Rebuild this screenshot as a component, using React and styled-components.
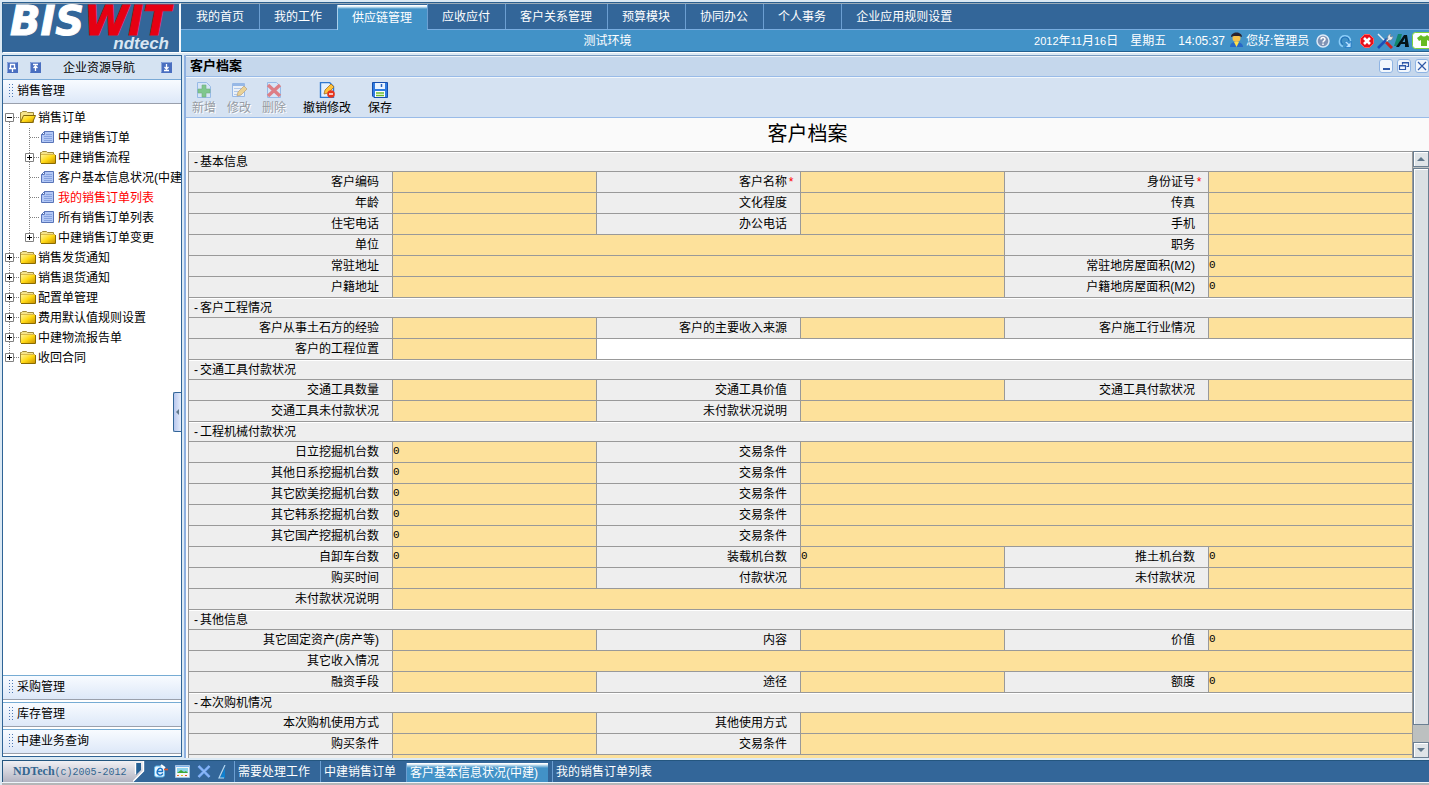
import { Fragment, useState } from "react";
import styled, { createGlobalStyle, css } from "styled-components";

const GlobalStyle = createGlobalStyle`
  * {
    box-sizing: border-box;
  }
  body {
    margin: 0;
    overflow: hidden;
    background: #dbe9f4;
    color: #000;
    font-family: "Liberation Sans", "Noto Sans CJK SC", sans-serif;
    font-size: 12px;
    line-height: 18px;
  }
  button {
    padding: 0;
    border: 0;
    background: none;
    color: inherit;
    font: inherit;
    cursor: pointer;
    white-space: nowrap;
  }
  svg {
    display: block;
    flex: none;
  }
`;

const Page = styled.div`
  display: flex;
  flex-direction: column;
  height: 100vh;
  padding: 2px 0 0 2px;
`;

/* ---------- header ---------- */

const Header = styled.header`
  display: flex;
  flex: none;
  border-top: 1px solid #2a5f8f;
  border-left: 1px solid #2a5f8f;
  border-bottom: 1px solid #fff;
  color: #fff;
`;

const Logo = styled.div`
  width: 178px;
  flex: none;
  padding-left: 7px;
  border-top: 1px solid #9aabb9;
  border-right: 2px solid #f4f8fb;
  background: #336699;
  font-style: italic;
  font-weight: 700;
`;

const LogoName = styled.div`
  height: 32px;
  font-family: "DejaVu Sans", sans-serif;
  font-size: 40px;
  line-height: 34px;
  white-space: nowrap;
  color: #fff;
  -webkit-text-stroke: 1px currentColor;

  & span {
    color: #e60012;
  }
`;

const LogoSub = styled.div`
  padding-right: 10px;
  text-align: right;
  font-size: 17px;
  line-height: 16px;
  color: #d9e6f2;
`;

const HeaderMain = styled.div`
  flex: 1;
  min-width: 0;
  border-top: 1px solid #9aabb9;
`;

const Nav = styled.nav`
  display: flex;
  height: 26px;
  background: #336699;
  box-shadow: inset 0 -1px #79ade0;
`;

const NavTab = styled.button`
  height: 25px;
  padding: 0 15px 0 14px;
  border-left: 1px solid #6c9fd2;
  &:first-child {
    border-left-color: #336699;
  }
  ${({ $active }) =>
    $active &&
    css`
      margin-top: 1px;
      border-left-color: #a9d0ec;
      background: linear-gradient(#fff 1px, #c4dff0 2px, #4292c7 4px);
    `}
`;

const StatusBar = styled.div`
  display: grid;
  grid-template-columns: 41fr 19fr;
  align-items: center;
  height: 22px;
  border-bottom: 1px solid #24608f;
  background: #4292c7;
`;

const EnvName = styled.div`
  text-align: center;
`;

const StatusRight = styled.div`
  display: flex;
  justify-content: flex-end;
  align-items: center;
  white-space: nowrap;

  & > span {
    margin-right: 12px;
  }
  & > span:nth-of-type(3) {
    margin-right: 4px;
  }
  & > button {
    flex: none;
    overflow: hidden;
  }
`;

const Digits = styled.b`
  font-size: 11px;
  font-weight: 400;
`;

const Greeting = styled.div`
  width: 70px;
  margin-left: 2px;
`;

const IconRow = styled.div`
  display: flex;
  align-items: center;
  gap: ${({ $gap }) => $gap}px;
  margin-right: 3px;
`;

/* ---------- sidebar ---------- */

const Body = styled.div`
  display: flex;
  flex: 1;
  min-height: 0;
  margin: 2px 0;
`;

const Sidebar = styled.aside`
  position: relative;
  display: flex;
  flex-direction: column;
  flex: none;
  width: 180px;
  margin-bottom: 1px;
  border: 1px solid #2f6496;
  background: #fff;
`;

const SideHead = styled.div`
  display: flex;
  align-items: center;
  height: 24px;
  padding: 0 9px 0 4px;
  border-bottom: 1px solid #7aaad6;
  background: #d5e3f2;

  & button + button {
    margin-left: 12px;
  }
  & span {
    flex: 1;
    padding-right: 4px;
    text-align: center;
  }
`;

const SideSection = styled.button`
  display: flex;
  align-items: center;
  gap: 4px;
  flex: none;
  height: 24px;
  padding: 0 0 2px 5px;
  border-bottom: 1px solid #9aa0ac;
  background: linear-gradient(#f8fbff, #dde8f8);
  text-align: left;
  ${({ $folded }) =>
    $folded &&
    css`
      height: 25px;
      margin-bottom: 2px;
      border-top: 1px solid #76acd4;
    `}
`;

const Grip = styled.i`
  width: 5px;
  height: 15px;
  background: radial-gradient(circle, #4c78b4 1px, transparent 1px) 0 0 / 3px 3px;
`;

const Tree = styled.ul`
  flex: 1;
  min-height: 0;
  margin: 0;
  padding: 4px 0 0;
  overflow: hidden;
  list-style: none;
`;

const TreeRow = styled.li`
  display: flex;
  align-items: center;
  height: 20px;
`;

const TreeLink = styled.a`
  margin-left: 2px;
  color: ${({ $hot }) => ($hot ? "#f00" : "#000")};
  text-decoration: none;
  white-space: nowrap;
`;

const Handle = styled.button`
  position: absolute;
  top: 48%;
  right: 0;
  display: grid;
  place-items: center;
  width: 8px;
  height: 40px;
  border: 1px solid #336699;
  border-right: 0;
  border-radius: 2px 0 0 2px;
  background: linear-gradient(90deg, #b8c8ee, #e6edfb);
`;

/* ---------- main panel ---------- */

const Main = styled.main`
  display: flex;
  flex-direction: column;
  flex: 1;
  min-width: 0;
  margin-left: 2px;
  border-left: 2px solid #8db0e0;
  background: #fafafa;
`;

const TitleBar = styled.div`
  display: flex;
  align-items: center;
  gap: 4px;
  flex: none;
  height: 22px;
  padding-left: 4px;
  border-top: 1px solid #7c9cc0;
  border-bottom: 1px solid #99bbe8;
  background: #c5d7ec;
  box-shadow: inset 0 1px #eef4fa;

  & strong {
    flex: 1;
    font-size: 13px;
  }
`;

const WinButton = styled.button`
  display: grid;
  place-items: center;
  width: 14px;
  height: 14px;
  overflow: hidden;
  border: 1px solid #8fb4e3;
  border-radius: 3px;
  background: #f2f7fd;
`;

const Toolbar = styled.div`
  display: flex;
  align-items: flex-start;
  gap: 11px;
  flex: none;
  height: 41px;
  padding: 4px 0 0 6px;
  border-top: 1px solid #f2f7fc;
  border-bottom: 1px solid #99bbe8;
  background: #d5e2f2;
`;

const ToolButton = styled.button`
  display: flex;
  flex-direction: column;
  align-items: center;
  line-height: 20px;

  &:disabled {
    color: #969ba3;
    text-shadow: 1px 1px #fff;
    cursor: default;
  }
  &:disabled svg {
    opacity: 0.5;
  }
  &:nth-child(n + 4) {
    margin-left: 6px;
  }
`;

const PageTitle = styled.h1`
  flex: none;
  height: 33px;
  margin: 0;
  text-align: center;
  font-size: 20px;
  font-weight: 400;
  line-height: 32px;
`;

const FormArea = styled.div`
  display: flex;
  flex: 1;
  min-height: 0;
  padding-left: 2px;
`;

const FormScroll = styled.div`
  flex: 1;
  overflow-y: auto;
  scrollbar-width: none;
`;

const Sheet = styled.table`
  width: 100%;
  table-layout: fixed;
  border-spacing: 0;
  border-top: 1px solid #999;
  border-left: 1px solid #999;
`;

const cell = css`
  padding: 0;
  border-right: 1px solid #999;
  border-bottom: 1px solid #999;
`;

const SectionCell = styled.th`
  ${cell}
  height: 20px;
  padding-left: 5px;
  background: #eee;
  box-shadow: inset 0 1px #fff;
  font-weight: 400;
  line-height: 18px;
  text-align: left;

  & button {
    width: 6px;
    text-align: left;
  }
`;

const LabelCell = styled.th`
  ${cell}
  height: 21px;
  padding-right: ${({ $required }) => ($required ? 5 : 13)}px;
  background: #eee;
  font-weight: 400;
  line-height: 18px;
  text-align: right;
  white-space: nowrap;

  & i {
    display: inline-block;
    width: 8px;
    color: #f00;
    font-style: normal;
    text-align: center;
  }
`;

const FieldCell = styled.td`
  ${cell}
  background: ${({ $blank }) => ($blank ? "#fff" : "#fde19b")};
`;

const Field = styled.input`
  display: block;
  width: 100%;
  height: 20px;
  padding: 0 0 2px;
  border: 0;
  outline: 0;
  background: transparent;
  font: 11px "Liberation Mono", monospace;
`;

const ScrollTrack = styled.div`
  display: flex;
  flex-direction: column;
  width: 16px;
  background: #bcc0c0;
`;

const ScrollButton = styled.button`
  display: grid;
  place-items: center;
  flex: none;
  height: 16px;
  border: 1px solid #6b7f92;
  background: #dfe4e8;
  box-shadow: inset 1px 1px #fff;
`;

const ScrollThumb = styled.div`
  flex: 0 0 97%;
  border: 1px solid #6b7f92;
  background: #dbe0e4;
  box-shadow: inset 1px 1px #fff;
`;

const ThumbArea = styled.div`
  display: flex;
  flex-direction: column;
  flex: 1;
  padding-top: 1px;
`;

/* ---------- footer ---------- */

const Footer = styled.footer`
  display: flex;
  flex: none;
  height: 22px;
  border-top: 1px solid #24567f;
  background: #336699;
  color: #fff;
`;

const FooterEdge = styled.div`
  flex: none;
  height: 3px;
  border-top: 1px solid #eef5fa;
  background: #b4b6b8;
`;

const Copyright = styled.div`
  display: flex;
  justify-content: space-between;
  flex: none;
  width: 143px;
  padding-left: 10px;
  border-left: 1px solid #24567f;
  background: linear-gradient(#f0f0f4, #b4b4c2);
  color: #336690;
  font: 10px/20px "Liberation Mono", monospace;
  white-space: nowrap;

  & b {
    font-family: "Liberation Serif", serif;
    font-size: 12px;
  }
`;

const FooterIcons = styled.div`
  display: flex;
  align-items: center;
  gap: 7px;
  width: 89px;
  padding-left: 8px;
`;

const Task = styled.button`
  padding: 0 10px 0 3px;
  border-left: 1px solid #6c9fd2;
  ${({ $active }) =>
    $active &&
    css`
      min-width: 142px;
      margin: 2px 4px 0 0;
      background: linear-gradient(#fff 1px, #c4dff0 2px, #4292c7 5px);
    `}
`;

/* ---------- icons ---------- */

const FolderIcon = ({ open }) => (
  <svg width="16" height="16" viewBox="0 0 16 16">
    <defs>
      <linearGradient id="folder" x1="0" y1="0" x2="1" y2="1">
        <stop offset="0" stopColor="#fff6a0" />
        <stop offset="0.5" stopColor="#ffd813" />
        <stop offset="1" stopColor="#c79000" />
      </linearGradient>
    </defs>
    <path d="M.5 2.500h1l1-1h4l1 1h6v10H.5z" fill="#f4e38a" stroke="#a08a3c" />
    {open ? (
      <path d="M3.500 5.500h12l-3 7H.5z" fill="url(#folder)" stroke="#80660c" />
    ) : (
      <>
        <path d="M1 4.500h14v9H1z" fill="url(#folder)" />
        <path d="M1 4.500h14" stroke="#d8b84a" />
        <path d="M15.500 5v8.500H1" fill="none" stroke="#8a6c00" />
      </>
    )}
  </svg>
);

const DocIcon = () => (
  <svg width="16" height="16" viewBox="0 0 16 16">
    <path d="M4.500 1.500h9v11h-12v-8z" fill="#b3c8f5" stroke="#5874b8" />
    <path d="M4.500 1.500v3h-3z" fill="#fff" stroke="#5874b8" />
    <path d="M6 4.500h6M4 6.500h8M4 8.500h8M4 10.500h8" stroke="#86a2e0" />
  </svg>
);

// one gutter of the tree: dotted connector with an optional +/- box
const Gutter = ({ box, down = true, up = true }) => (
  <svg width="17" height="20" viewBox="0 0 17 20">
    <g stroke="#808080" strokeDasharray="1 1">
      {up && <path d="M6.500 0v10" />}
      {down && <path d="M6.500 10v10" />}
      <path d="M7 9.500h10" />
    </g>
    {box && (
      <>
        <path d="M2.500 5.500h8v8h-8z" fill="#fff" stroke="#808080" />
        <path d={box === "+" ? "M4 9.500h5M6.500 7v5" : "M4 9.500h5"} stroke="#000" />
      </>
    )}
  </svg>
);

const Rail = () => <svg width="20" height="20" viewBox="0 0 20 20">
  <path d="M6.500 0v20" stroke="#808080" strokeDasharray="1 1" />
</svg>;

const HEAD_PATHS = {
  pin: "M3.500 2.500h4v4h-4zM2 6.500h7M5.500 7v3",
  up: "M3 2.500h5M5.500 9V4M3.500 6l2-2 2 2",
  down: "M3 8.500h5M5.500 2v5M3.500 5l2 2 2-2",
};

const HeadIcon = ({ kind }) => (
  <svg width="11" height="11" viewBox="0 0 11 11">
    <rect width="11" height="11" fill="#4a6fc0" />
    <path d="M.5 10.500V.5h10" fill="none" stroke="#8ba6dc" />
    <path d={HEAD_PATHS[kind]} fill="none" stroke="#fff" strokeWidth="1.300" />
  </svg>
);

const UserIcon = () => (
  <svg width="15" height="18" viewBox="0 0 15 18">
    <path d="M1 15c0-4 3-5 6-5s7 1 7 5z" fill="#2868c8" />
    <path d="M5 10l2.500 5L10 10z" fill="#ffe04a" />
    <circle cx="7.500" cy="6" r="4" fill="#f5c24c" />
    <path d="M2 5c0-6 11-6 11 0L10 4 5 4z" fill="#2a2430" />
  </svg>
);

const HelpIcon = () => (
  <svg width="14" height="14" viewBox="0 0 14 14">
    <circle cx="7" cy="7" r="6" fill="#8093b5" stroke="#dce9f7" strokeWidth="1.500" />
    <path d="M5 5.500C5 3 9 3 9 5.300 9 7 7 6.800 7 8.500M7 9.500v1.500" fill="none" stroke="#fff" strokeWidth="1.500" />
  </svg>
);

const RefreshIcon = () => (
  <svg width="14" height="14" viewBox="0 0 14 14">
    <path d="M5 12.500A5.500 5.500 0 1 1 12.500 7" fill="none" stroke="#8accf8" strokeWidth="1.600" />
    <path d="M5 10.500A4 4 0 1 1 11 7" fill="none" stroke="#2272b8" strokeWidth="1.200" />
    <path d="M7 13.500h6v-6l-2 2-2.500-2.500-1.500 1.500L9.500 11z" fill="#b9e2ff" stroke="#1c76c8" strokeWidth=".8" />
  </svg>
);

const StopIcon = () => (
  <svg width="14" height="14" viewBox="0 0 14 14">
    <path d="M4.500.5h5l4 4v5l-4 4h-5l-4-4v-5z" fill="#e8101c" stroke="#ff6060" />
    <path d="M4 4l6 6M10 4l-6 6" stroke="#fff" strokeWidth="2.600" />
  </svg>
);

const ToolsIcon = () => (
  <svg width="16" height="16" viewBox="0 0 16 16">
    <path d="M1 1l9 9" stroke="#e5eef6" strokeWidth="1.500" />
    <path d="M9 9l6 6" stroke="#cc2020" strokeWidth="3" />
    <path d="M1 15l9-9" stroke="#1d4eb8" strokeWidth="2.600" />
    <path d="M9 7l2-1c-1-3 1-5 3-5l-1 2 1 1 2-1c0 3-2 5-4 4l-2 2z" fill="#e8eaed" stroke="#6d7380" strokeWidth=".6" />
  </svg>
);

const FontIcon = () => (
  <svg width="15" height="15" viewBox="0 0 15 15">
    <path d="M0 13L4 1h4L5 13z" fill="#12866f" />
    <path d="M2 14L10 2h3l2 12h-4v-3H7l-2 3zM8.500 9H11V5z" fill="#04141a" fillRule="evenodd" />
  </svg>
);

const SkinIcon = () => (
  <svg width="17" height="17" viewBox="0 0 17 17">
    <rect x=".5" y=".5" width="26" height="16" rx="3" fill="#fff" stroke="#7fd23c" />
    <path d="M5 6l4-3c2 2 4 2 6 0l4 3-2 3-2-1v6H9V8L7 9z" fill="#66bb22" />
  </svg>
);

const ArrowIcon = ({ d }) => (
  <svg width="8" height="8" viewBox="0 0 8 8">
    <path d={d} fill="#60788c" />
  </svg>
);

const WIN_PATHS = {
  min: "M3 9h7",
  restore: "M4.500 4.500v-2h6v4h-2M4 3h7M1.500 5.500h6v4h-6zM1 6h7",
  close: "M2 2l8 8M10 2l-8 8",
};

const WinIcon = ({ kind }) => (
  <svg width="12" height="12" viewBox="0 0 12 12">
    <path d={WIN_PATHS[kind]} fill="none" stroke="#2e58a8" strokeWidth={kind === "min" ? 2 : 1.200} />
  </svg>
);

const PENCIL = (
  <path d="M5 12l1-4 6-6 3 3-6 6z" fill="#ffc33c" stroke="#a8701c" strokeWidth=".8" />
);

const TOOL_ART = {
  add: (
    <>
      <path d="M1.500.5h9l4 4v11h-13z" fill="#d8e9fb" stroke="#5a93dc" />
      <path d="M6 3h4v4h4v4h-4v4H6v-4H2V7h4z" fill="#2cae2c" stroke="#137a13" strokeWidth=".6" />
    </>
  ),
  edit: (
    <>
      <path d="M1.500 1.500h12v13h-12z" fill="#fff" stroke="#5a8fdc" />
      <path d="M2 3h11" stroke="#5a8fdc" strokeWidth="2" />
      <path d="M3 6.500h9M3 9.500h5M3 12.500h4" stroke="#8fb2e6" />
      <path d="M6 14l1-4 6-6 3 3-6 6z" fill="#ffc33c" stroke="#a8701c" strokeWidth=".8" />
    </>
  ),
  remove: (
    <>
      <path d="M1.500.5h9l4 4v11h-13z" fill="#d8e9fb" stroke="#5a93dc" />
      <path d="M2 3l12 11M14 3L2 14" stroke="#e51d1d" strokeWidth="3.400" />
    </>
  ),
  undo: (
    <>
      <path d="M1.500.5h9l4 4v11h-13z" fill="#e3f0ff" stroke="#2f78d0" strokeWidth="1.400" />
      {PENCIL}
      <circle cx="12" cy="12" r="3.800" fill="#e8341c" />
      <path d="M10 12h4" stroke="#fff" strokeWidth="1.400" />
    </>
  ),
  save: (
    <>
      <path d="M.5.5h15v15H2l-1.500-1.500z" fill="#2f7be0" stroke="#164fae" />
      <path d="M3 1h10v6H3z" fill="#eaf4ff" />
      <path d="M9.500 2v3" stroke="#2760bc" strokeWidth="1.500" />
      <path d="M3 9h10v6H3z" fill="#fff" />
      <path d="M4 11h8M4 13.500h8" stroke="#6cbc30" strokeWidth="1.400" />
    </>
  ),
};

const ToolIcon = ({ kind }) => (
  <svg width="16" height="16" viewBox="0 0 16 16">
    {TOOL_ART[kind]}
  </svg>
);

const RibbonIcon = () => (
  <svg width="12" height="21" viewBox="0 0 12 21">
    <path d="M0 21L11 10V0h1v21z" fill="#336699" />
    <path d="M3 2h5v7l-5 5z" fill="#245f94" />
    <path d="M2.500 2v11M0 20.500L10.500 10V0" fill="none" stroke="#fff" strokeWidth="1.400" />
  </svg>
);

const BrowserIcon = () => (
  <svg width="15" height="15" viewBox="0 0 15 15">
    <rect x="1.500" y="2" width="10" height="11" rx="2" fill="#e8f6ff" stroke="#5cb8ee" />
    <path d="M10 9.500C7 13 3 10 4.500 6.500S10 4 9.500 7.500H5" fill="none" stroke="#1872c4" strokeWidth="1.400" />
    <path d="M8 1l4 3" stroke="#fff" strokeWidth="2" />
    <path d="M11 5.500h4" stroke="#e0542c" strokeWidth="1.600" />
  </svg>
);

const PictureIcon = () => (
  <svg width="15" height="13" viewBox="0 0 15 13">
    <path d="M.5.500h14v12H.5z" fill="#f4f6f8" stroke="#a5c4e4" />
    <path d="M1 1.500h13" stroke="#7db4ec" />
    <path d="M2 3h11v5H2z" fill="#8fd4ec" />
    <path d="M2 8l4-3 3 2 2-1 2 2z" fill="#3da838" />
    <path d="M2 10.500h2" stroke="#e8742c" />
    <path d="M6 10.500h2" stroke="#e2b92c" />
    <path d="M10 10.500h2" stroke="#e2502c" />
  </svg>
);

const CrossIcon = () => (
  <svg width="14" height="13" viewBox="0 0 14 13">
    <path d="M1.500 1l11 11M12.500 1l-11 11" stroke="#6da2ee" strokeWidth="2.800" />
    <path d="M1.500 1l11 11M12.500 1l-11 11" stroke="#a3c7fa" />
  </svg>
);

const PenIcon = () => (
  <svg width="8" height="14" viewBox="0 0 8 14">
    <path d="M7 3v10H2z" fill="#0d80d0" />
    <path d="M7 0L1 13h5" fill="none" stroke="#b4d8f2" strokeWidth="1.200" />
  </svg>
);

/* ---------- data ---------- */

const NAV = [
  "我的首页",
  "我的工作",
  "供应链管理",
  "应收应付",
  "客户关系管理",
  "预算模块",
  "协同办公",
  "个人事务",
  "企业应用规则设置",
];

const TREE = [
  { text: "销售订单", box: "-", open: true },
  { text: "中建销售订单", level: 1, doc: true },
  { text: "中建销售流程", level: 1, box: "+" },
  { text: "客户基本信息状况(中建)", level: 1, doc: true },
  { text: "我的销售订单列表", level: 1, doc: true, hot: true },
  { text: "所有销售订单列表", level: 1, doc: true },
  { text: "中建销售订单变更", level: 1, box: "+", last: true },
  { text: "销售发货通知", box: "+" },
  { text: "销售退货通知", box: "+" },
  { text: "配置单管理", box: "+" },
  { text: "费用默认值规则设置", box: "+" },
  { text: "中建物流报告单", box: "+" },
  { text: "收回合同", box: "+", last: true },
];

const TOOLS = [
  { text: "新增", kind: "add", disabled: true },
  { text: "修改", kind: "edit", disabled: true },
  { text: "删除", kind: "remove", disabled: true },
  { text: "撤销修改", kind: "undo" },
  { text: "保存", kind: "save" },
];

// field: [label, value, colSpan, required]
const SECTIONS = [
  {
    title: "基本信息",
    rows: [
      [["客户编码"], ["客户名称", "", 1, true], ["身份证号", "", 1, true]],
      [["年龄"], ["文化程度"], ["传真"]],
      [["住宅电话"], ["办公电话"], ["手机"]],
      [["单位", "", 3], ["职务"]],
      [["常驻地址", "", 3], ["常驻地房屋面积(M2)", "0"]],
      [["户籍地址", "", 3], ["户籍地房屋面积(M2)", "0"]],
    ],
  },
  {
    title: "客户工程情况",
    rows: [
      [["客户从事土石方的经验"], ["客户的主要收入来源"], ["客户施工行业情况"]],
      [["客户的工程位置"]],
    ],
  },
  {
    title: "交通工具付款状况",
    rows: [
      [["交通工具数量"], ["交通工具价值"], ["交通工具付款状况"]],
      [["交通工具未付款状况"], ["未付款状况说明", "", 3]],
    ],
  },
  {
    title: "工程机械付款状况",
    rows: [
      [["日立挖掘机台数", "0"], ["交易条件", "", 3]],
      [["其他日系挖掘机台数", "0"], ["交易条件", "", 3]],
      [["其它欧美挖掘机台数", "0"], ["交易条件", "", 3]],
      [["其它韩系挖掘机台数", "0"], ["交易条件", "", 3]],
      [["其它国产挖掘机台数", "0"], ["交易条件", "", 3]],
      [["自卸车台数", "0"], ["装载机台数", "0"], ["推土机台数", "0"]],
      [["购买时间"], ["付款状况"], ["未付款状况"]],
      [["未付款状况说明", "", 5]],
    ],
  },
  {
    title: "其他信息",
    rows: [
      [["其它固定资产(房产等)"], ["内容"], ["价值", "0"]],
      [["其它收入情况", "", 5]],
      [["融资手段"], ["途径"], ["额度", "0"]],
    ],
  },
  {
    title: "本次购机情况",
    rows: [
      [["本次购机使用方式"], ["其他使用方式", "", 3]],
      [["购买条件"], ["交易条件", "", 3]],
    ],
  },
];

const TASKS = ["需要处理工作", "中建销售订单", "客户基本信息状况(中建)", "我的销售订单列表"];

/* ---------- parts ---------- */

function FormRow({ fields, id }) {
  const used = fields.reduce((sum, [, , span = 1]) => sum + span + 1, 0);

  return (
    <tr>
      {fields.map(([label, value = "", span = 1, required], index) => (
        <Fragment key={index}>
          <LabelCell scope="row" $required={required}>
            <label htmlFor={`${id}-${index}`}>{label}</label>
            {required && <i>*</i>}
          </LabelCell>
          <FieldCell colSpan={span}>
            <Field id={`${id}-${index}`} defaultValue={value} />
          </FieldCell>
        </Fragment>
      ))}
      {used < 6 && <FieldCell colSpan={6 - used} $blank />}
    </tr>
  );
}

function FormSection({ section, id }) {
  const [open, setOpen] = useState(true);

  return (
    <tbody>
      <tr>
        <SectionCell colSpan={6}>
          <button onClick={() => setOpen(!open)}>{open ? "-" : "+"}</button>
          {section.title}
        </SectionCell>
      </tr>
      {open &&
        section.rows.map((fields, index) => (
          <FormRow key={index} fields={fields} id={`${id}-${index}`} />
        ))}
    </tbody>
  );
}

function App() {
  const [tab, setTab] = useState(2);
  const [task, setTask] = useState(2);

  return (
    <Page>
      <GlobalStyle />
      <Header>
        <Logo>
          <LogoName>
            BIS<span>WIT</span>
          </LogoName>
          <LogoSub>ndtech</LogoSub>
        </Logo>
        <HeaderMain>
          <Nav>
            {NAV.map((text, index) => (
              <NavTab key={text} $active={index === tab} onClick={() => setTab(index)}>
                {text}
              </NavTab>
            ))}
          </Nav>
          <StatusBar>
            <EnvName>测试环境</EnvName>
            <StatusRight>
              <span>
                <Digits>2012</Digits>年<Digits>11</Digits>月<Digits>16</Digits>日
              </span>
              <span>星期五</span>
              <span>14:05:37</span>
              <UserIcon />
              <Greeting>您好:管理员</Greeting>
              <IconRow $gap={8}>
                <button aria-label="帮助"><HelpIcon /></button>
                <button aria-label="刷新"><RefreshIcon /></button>
                <button aria-label="退出"><StopIcon /></button>
              </IconRow>
              <IconRow $gap={1}>
                <button aria-label="工具"><ToolsIcon /></button>
                <button aria-label="字体"><FontIcon /></button>
              </IconRow>
              <button aria-label="皮肤"><SkinIcon /></button>
            </StatusRight>
          </StatusBar>
        </HeaderMain>
      </Header>

      <Body>
        <Sidebar>
          <SideHead>
            <button aria-label="固定"><HeadIcon kind="pin" /></button>
            <button aria-label="收起"><HeadIcon kind="up" /></button>
            <span>企业资源导航</span>
            <button aria-label="展开"><HeadIcon kind="down" /></button>
          </SideHead>
          <SideSection>
            <Grip />
            销售管理
          </SideSection>
          <Tree>
            {TREE.map((node, index) => (
              <TreeRow key={node.text}>
                {node.level && <Rail />}
                <Gutter box={node.box} up={index > 0} down={!node.last} />
                {node.doc ? <DocIcon /> : <FolderIcon open={node.open} />}
                <TreeLink href="#" $hot={node.hot}>
                  {node.text}
                </TreeLink>
              </TreeRow>
            ))}
          </Tree>
          {["采购管理", "库存管理", "中建业务查询"].map((text) => (
            <SideSection key={text} $folded>
              <Grip />
              {text}
            </SideSection>
          ))}
          <Handle aria-label="折叠">
            <ArrowIcon d="M5 1v6L2 4z" />
          </Handle>
        </Sidebar>

        <Main>
          <TitleBar>
            <strong>客户档案</strong>
            <WinButton aria-label="最小化"><WinIcon kind="min" /></WinButton>
            <WinButton aria-label="还原"><WinIcon kind="restore" /></WinButton>
            <WinButton aria-label="关闭"><WinIcon kind="close" /></WinButton>
          </TitleBar>
          <Toolbar>
            {TOOLS.map(({ text, kind, disabled }) => (
              <ToolButton key={kind} disabled={disabled}>
                <ToolIcon kind={kind} />
                {text}
              </ToolButton>
            ))}
          </Toolbar>
          <PageTitle>客户档案</PageTitle>
          <FormArea>
            <FormScroll>
              <Sheet>
                <colgroup>
                  {[0, 1, 2, 3, 4, 5].map((col) => (
                    <col key={col} />
                  ))}
                </colgroup>
                {SECTIONS.map((section, index) => (
                  <FormSection key={section.title} section={section} id={`f${index}`} />
                ))}
                <tbody>
                  <tr>
                    <LabelCell as="td" />
                    <FieldCell colSpan={5} />
                  </tr>
                </tbody>
              </Sheet>
            </FormScroll>
            <ScrollTrack>
              <ScrollButton aria-label="向上">
                <ArrowIcon d="M0 6l4-4 4 4z" />
              </ScrollButton>
              <ThumbArea>
                <ScrollThumb />
              </ThumbArea>
              <ScrollButton aria-label="向下">
                <ArrowIcon d="M0 2l4 4 4-4z" />
              </ScrollButton>
            </ScrollTrack>
          </FormArea>
        </Main>
      </Body>

      <Footer>
        <Copyright>
          <span>
            <b>NDTech</b>(c)2005-2012
          </span>
          <RibbonIcon />
        </Copyright>
        <FooterIcons>
          <BrowserIcon />
          <PictureIcon />
          <CrossIcon />
          <PenIcon />
        </FooterIcons>
        {TASKS.map((text, index) => (
          <Task key={text} $active={index === task} onClick={() => setTask(index)}>
            {text}
          </Task>
        ))}
      </Footer>
      <FooterEdge />
    </Page>
  );
}

export default App;
